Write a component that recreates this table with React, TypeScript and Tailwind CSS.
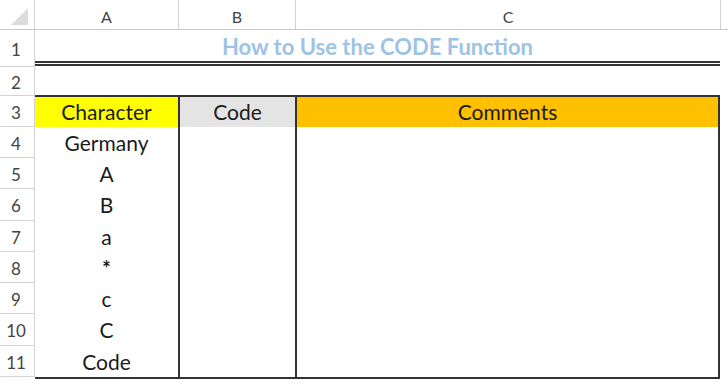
import React from 'react'

const font = { fontFamily: 'Lato, "Open Sans", sans-serif' }

const rows = [
  { n: 4, v: 'Germany', h: 'h-[31px]' },
  { n: 5, v: 'A', h: 'h-[31px]' },
  { n: 6, v: 'B', h: 'h-[32px]' },
  { n: 7, v: 'a', h: 'h-[31px]' },
  { n: 8, v: '*', h: 'h-[31px]' },
  { n: 9, v: 'c', h: 'h-[31px]' },
  { n: 10, v: 'C', h: 'h-[32px]' },
  { n: 11, v: 'Code', h: 'h-[31px]' },
]

function RowHead({ n, className = '' }: { n: number; className?: string }) {
  return (
    <div
      className={`w-[35px] shrink-0 flex items-center justify-center border-r border-b border-[#d4d4d4] text-[17px] text-[#444] pt-[3px] pr-[2px] ${className}`}
    >
      {n}
    </div>
  )
}

export default function App() {
  return (
    <div className="w-[728px] h-[385px] bg-white overflow-hidden text-[#1b1b1b]" style={font}>
      {/* column headers */}
      <div className="flex h-[30px] border-b border-[#c8c8c8] text-[16px] text-[#444]">
        <div className="w-[35px] shrink-0 border-r border-[#d4d4d4] flex items-end justify-end p-[4px] pr-[6px]">
          <svg width="17" height="17" viewBox="0 0 17 17">
            <polygon points="17,0 17,17 0,17" fill="#dcdcdc" />
          </svg>
        </div>
        <div className="w-[144px] shrink-0 border-r border-[#d4d4d4] flex items-center justify-center pt-[4px]">A</div>
        <div className="w-[117px] shrink-0 border-r border-[#d4d4d4] flex items-center justify-center pt-[4px]">B</div>
        <div className="w-[425px] shrink-0 border-r border-[#d4d4d4] flex items-center justify-center pt-[4px]">C</div>
      </div>

      {/* row 1: title */}
      <div className="flex h-[36px]">
        <RowHead n={1} className="border-b-0" />
        <div className="w-[685px] shrink-0 flex items-center justify-center pt-[2px] border-b-[5px] border-double border-[#333] text-[22px] font-bold text-[#9dc3e6]">
          How to Use the CODE Function
        </div>
      </div>

      {/* row 2 */}
      <div className="flex h-[29px]">
        <RowHead n={2} className="border-t border-b-0" />
        <div className="w-[685px] shrink-0" />
      </div>

      {/* row 3: headers */}
      <div className="flex h-[32px]">
        <RowHead n={3} className="border-t" />
        <div className="w-[685px] shrink-0 flex border-t-2 border-[#333] text-[21px]">
          <div className="w-[143px] shrink-0 bg-[#ffff00] flex items-center justify-center">Character</div>
          <div className="w-[117px] shrink-0 bg-[#e4e4e4] border-l-2 border-[#333] flex items-center justify-center">Code</div>
          <div className="w-[425px] shrink-0 bg-[#ffc000] border-x-2 border-[#333] flex items-center justify-center">Comments</div>
        </div>
      </div>

      {/* data rows */}
      <div className="flex">
        <div className="flex flex-col">
          {rows.map((r) => (
            <RowHead key={r.n} n={r.n} className={r.h} />
          ))}
        </div>
        <div className="w-[685px] shrink-0 flex h-[252px] border-b-2 border-[#333] text-[21px]">
          <div className="w-[143px] shrink-0 flex flex-col">
            {rows.map((r) => (
              <div key={r.n} className={`${r.h} flex items-center justify-center ${r.v === '*' ? 'font-bold' : ''}`}>
                {r.v}
              </div>
            ))}
          </div>
          <div className="w-[117px] shrink-0 border-l-2 border-[#333]" />
          <div className="w-[425px] shrink-0 border-x-2 border-[#333]" />
        </div>
      </div>
    </div>
  )
}
